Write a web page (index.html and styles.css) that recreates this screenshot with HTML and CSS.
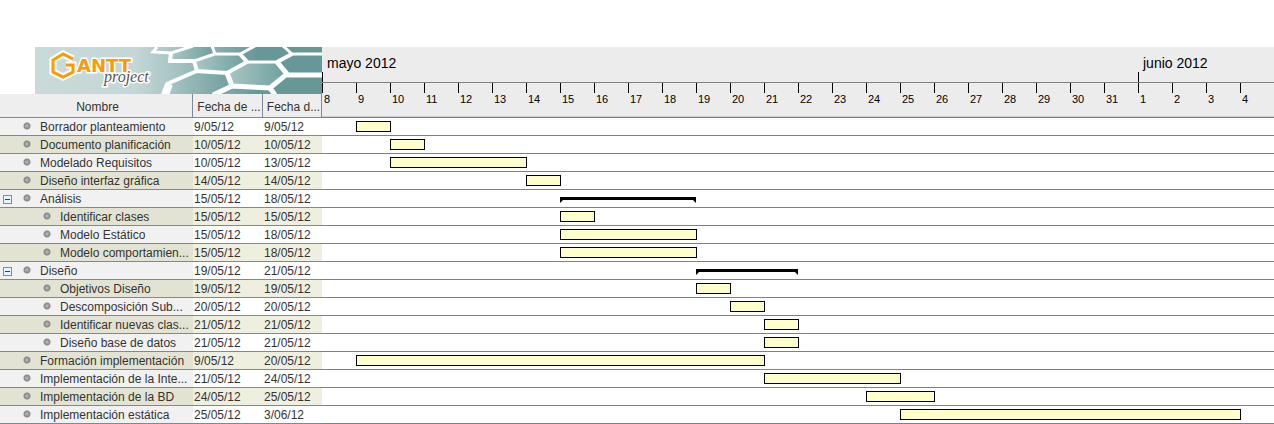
FILE: index.html
```html
<!DOCTYPE html>
<html lang="es">
<head>
<meta charset="utf-8">
<title>GanttProject</title>
<link rel="stylesheet" href="styles.css">
</head>
<body>
<main class="gantt">
  <section class="tasks">
    <svg class="banner" viewBox="0 0 287 47" role="img" aria-label="GanttProject">
      <defs>
        <linearGradient id="sea" x1="0" x2="1" y1="0" y2="0">
          <stop offset="0" stop-color="#c8dbda"/>
          <stop offset=".35" stop-color="#c3d7d6"/>
          <stop offset=".5" stop-color="#a3c2c1"/>
          <stop offset=".78" stop-color="#659896"/>
          <stop offset="1" stop-color="#659896"/>
        </linearGradient>
        <linearGradient id="cell" x1="0" x2="1" y1="0" y2="0">
          <stop offset="0" stop-color="#a9c7c5"/>
          <stop offset="1" stop-color="#6d9f9d"/>
        </linearGradient>
      </defs>
      <rect width="287" height="47" fill="url(#sea)"/>
      <g fill="url(#cell)">
        <path d="M136 6 158 0H177L180 7 159 14 135 13Z"/>
        <path d="M180 7H205L212 15 192 26 162 24 159 14Z"/>
        <path d="M134 36 162 24 192 26 197 39 178 47H131Z"/>
        <path d="M192 26 212 15H242L252 27 235 41 197 39Z"/>
      </g>
      <g class="mesh">
        <path stroke-width="3" d="M122 0 118 5 136 6 158-1M180 7 177-1M180 7H205L220-1M257 7 248-1M257 7H288M159 14 180 7M212 15H242"/>
        <path stroke-width="4" d="M136 6 135 14 159 14 162 24 192 26 212 15 205 7M242 15 257 7M162 24 134 36"/>
        <path stroke-width="5" d="M134 35 130 48M192 26 197 39 235 41 252 27 242 15M252 28H288M197 39 178 48M235 41 240 48"/>
        <path stroke-width="8" d="M134 37 130 48"/>
      </g>
      <g class="mark">
        <path class="mark-halo" d="M38 12 28 7 18 13V25L28 30 38 25V18H31"/>
        <path class="mark-line" d="M38 12 28 7 18 13V25L28 30 38 25V18H31"/>
      </g>
      <text class="logo-main" x="42" y="25">ANTT</text>
      <text class="logo-sub" x="69" y="35">project</text>
    </svg>
    <table class="task-table">
      <colgroup><col class="col-name"><col class="col-start"><col class="col-end"></colgroup>
      <thead><tr><th>Nombre</th><th>Fecha de ...</th><th>Fecha d...</th></tr></thead>
      <tbody>
        <tr><td>Borrador planteamiento</td><td>9/05/12</td><td>9/05/12</td></tr>
        <tr><td>Documento planificación</td><td>10/05/12</td><td>10/05/12</td></tr>
        <tr><td>Modelado Requisitos</td><td>10/05/12</td><td>13/05/12</td></tr>
        <tr><td>Diseño interfaz gráfica</td><td>14/05/12</td><td>14/05/12</td></tr>
        <tr class="group"><td><button class="toggle" type="button" aria-expanded="true" aria-label="Contraer Análisis"></button>Análisis</td><td>15/05/12</td><td>18/05/12</td></tr>
        <tr class="child"><td>Identificar clases</td><td>15/05/12</td><td>15/05/12</td></tr>
        <tr class="child"><td>Modelo Estático</td><td>15/05/12</td><td>18/05/12</td></tr>
        <tr class="child"><td>Modelo comportamien...</td><td>15/05/12</td><td>18/05/12</td></tr>
        <tr class="group"><td><button class="toggle" type="button" aria-expanded="true" aria-label="Contraer Diseño"></button>Diseño</td><td>19/05/12</td><td>21/05/12</td></tr>
        <tr class="child"><td>Objetivos Diseño</td><td>19/05/12</td><td>19/05/12</td></tr>
        <tr class="child"><td>Descomposición Sub...</td><td>20/05/12</td><td>20/05/12</td></tr>
        <tr class="child"><td>Identificar nuevas clas...</td><td>21/05/12</td><td>21/05/12</td></tr>
        <tr class="child"><td>Diseño base de datos</td><td>21/05/12</td><td>21/05/12</td></tr>
        <tr><td>Formación implementación</td><td>9/05/12</td><td>20/05/12</td></tr>
        <tr><td>Implementación de la Inte...</td><td>21/05/12</td><td>24/05/12</td></tr>
        <tr><td>Implementación de la BD</td><td>24/05/12</td><td>25/05/12</td></tr>
        <tr><td>Implementación estática</td><td>25/05/12</td><td>3/06/12</td></tr>
      </tbody>
    </table>
  </section>
  <section class="chart">
    <header class="timeline">
      <div class="months">
        <span class="month" style="grid-column: 1 / 25">mayo 2012</span>
        <span class="month" style="grid-column: 25 / 29">junio 2012</span>
      </div>
      <div class="days">
        <span>8</span><span>9</span><span>10</span><span>11</span><span>12</span><span>13</span><span>14</span><span>15</span><span>16</span><span>17</span><span>18</span><span>19</span><span>20</span><span>21</span><span>22</span><span>23</span><span>24</span><span>25</span><span>26</span><span>27</span><span>28</span><span>29</span><span>30</span><span>31</span><span>1</span><span>2</span><span>3</span><span>4</span>
      </div>
    </header>
    <div class="row"><i class="bar" style="grid-column: 2 / 3"></i></div>
    <div class="row"><i class="bar" style="grid-column: 3 / 4"></i></div>
    <div class="row"><i class="bar" style="grid-column: 3 / 7"></i></div>
    <div class="row"><i class="bar" style="grid-column: 7 / 8"></i></div>
    <div class="row"><i class="summary" style="grid-column: 8 / 12"></i></div>
    <div class="row"><i class="bar" style="grid-column: 8 / 9"></i></div>
    <div class="row"><i class="bar" style="grid-column: 8 / 12"></i></div>
    <div class="row"><i class="bar" style="grid-column: 8 / 12"></i></div>
    <div class="row"><i class="summary" style="grid-column: 12 / 15"></i></div>
    <div class="row"><i class="bar" style="grid-column: 12 / 13"></i></div>
    <div class="row"><i class="bar" style="grid-column: 13 / 14"></i></div>
    <div class="row"><i class="bar" style="grid-column: 14 / 15"></i></div>
    <div class="row"><i class="bar" style="grid-column: 14 / 15"></i></div>
    <div class="row"><i class="bar" style="grid-column: 2 / 14"></i></div>
    <div class="row"><i class="bar" style="grid-column: 14 / 18"></i></div>
    <div class="row"><i class="bar" style="grid-column: 17 / 19"></i></div>
    <div class="row"><i class="bar" style="grid-column: 18 / 28"></i></div>
  </section>
</main>
</body>
</html>
```
FILE: styles.css
```css
* { box-sizing: border-box; }

body {
  margin: 0;
  background: #fff;
  color: #333;
  font-family: "Liberation Sans", Arial, sans-serif;
  font-size: 12px;
}

.gantt {
  display: grid;
  grid-template-columns: 322px 1fr;
  padding-top: 47px;
}

/* Task list */
.banner {
  display: block;
  width: 287px;
  height: 47px;
  margin-left: 35px;
}
.mesh { fill: none; stroke: #fff; }
.mark path { fill: none; }
.mark .mark-halo { stroke: #fff; stroke-width: 7; }
.mark .mark-line { stroke: #ff9900; stroke-width: 3; }
.logo-main, .logo-sub {
  stroke: #fff;
  stroke-width: 3;
  paint-order: stroke;
}
.logo-main {
  font: bold 18px "DejaVu Sans", sans-serif;
  fill: #ff9900;
}
.logo-sub {
  font: italic 16px "Liberation Serif", serif;
  fill: #555;
}

.task-table {
  width: 100%;
  table-layout: fixed;
  border-collapse: separate;
  border-spacing: 0;
}
.col-name { width: 193px; }
.col-start { width: 70px; }

.task-table th {
  height: 24px;
  padding: 2px 0 0 3px;
  background: #eee;
  border-right: 1px solid #7a8a99;
  border-bottom: 1px solid #7a8a99;
  font-weight: normal;
  white-space: nowrap;
}
.task-table td {
  height: 18px;
  padding: 1px 0 0 1px;
  border-bottom: 1px solid #7a8a99;
  line-height: 16px;
  white-space: nowrap;
}
.task-table td:first-child {
  padding-left: 40px;
  background: radial-gradient(circle at 27px 8px, #bbb 0, #888 3px, transparent 4px) #f1f1f1;
}
.task-table tr:nth-child(even) td { background-color: #efefe0; }
.task-table tr:nth-child(even) td:first-child { background-color: #e2e3d2; }
.task-table .child td:first-child {
  padding-left: 60px;
  background-image: radial-gradient(circle at 47px 8px, #bbb 0, #888 3px, transparent 4px);
}

.toggle {
  width: 9px;
  height: 9px;
  margin: 0 28px 0 -37px;
  padding: 0;
  border: 1px solid #7a8fb0;
  background: linear-gradient(#246, #246) center / 5px 1px no-repeat #e4f4ff;
  vertical-align: 0;
}

/* Chart */
.chart { min-width: 0; overflow: hidden; }

.timeline {
  height: 71px;
  background: #ececec;
  border-bottom: 1px solid #808080;
  box-shadow: inset 0 -1px #ccc;
  color: #000;
}
.months, .days, .row {
  display: grid;
  grid-template-columns: repeat(28, 1fr);
}
.months {
  height: 36px;
  border-bottom: 1px solid #808080;
}
.month {
  padding-left: 5px;
  background: linear-gradient(#000, #000) left bottom / 1px 10px no-repeat;
  font-size: 14px;
  line-height: 32px;
}
.days { font-size: 11px; }
.days span {
  height: 34px;
  padding-left: 2px;
  background: linear-gradient(#000, #000) left top / 1px 10px no-repeat;
  line-height: 32px;
}

.row {
  height: 18px;
  padding-top: 3px;
  border-bottom: 1px solid #808080;
}
.bar {
  height: 11px;
  margin-right: -1px;
  border: 1px solid #000;
  background: #ffffcc;
}
.summary {
  height: 6px;
  margin-top: 4px;
  background: #000;
  clip-path: polygon(0 0, 100% 0, 100% 100%, calc(100% - 3px) 3px, 3px 3px, 0 100%);
}
```
